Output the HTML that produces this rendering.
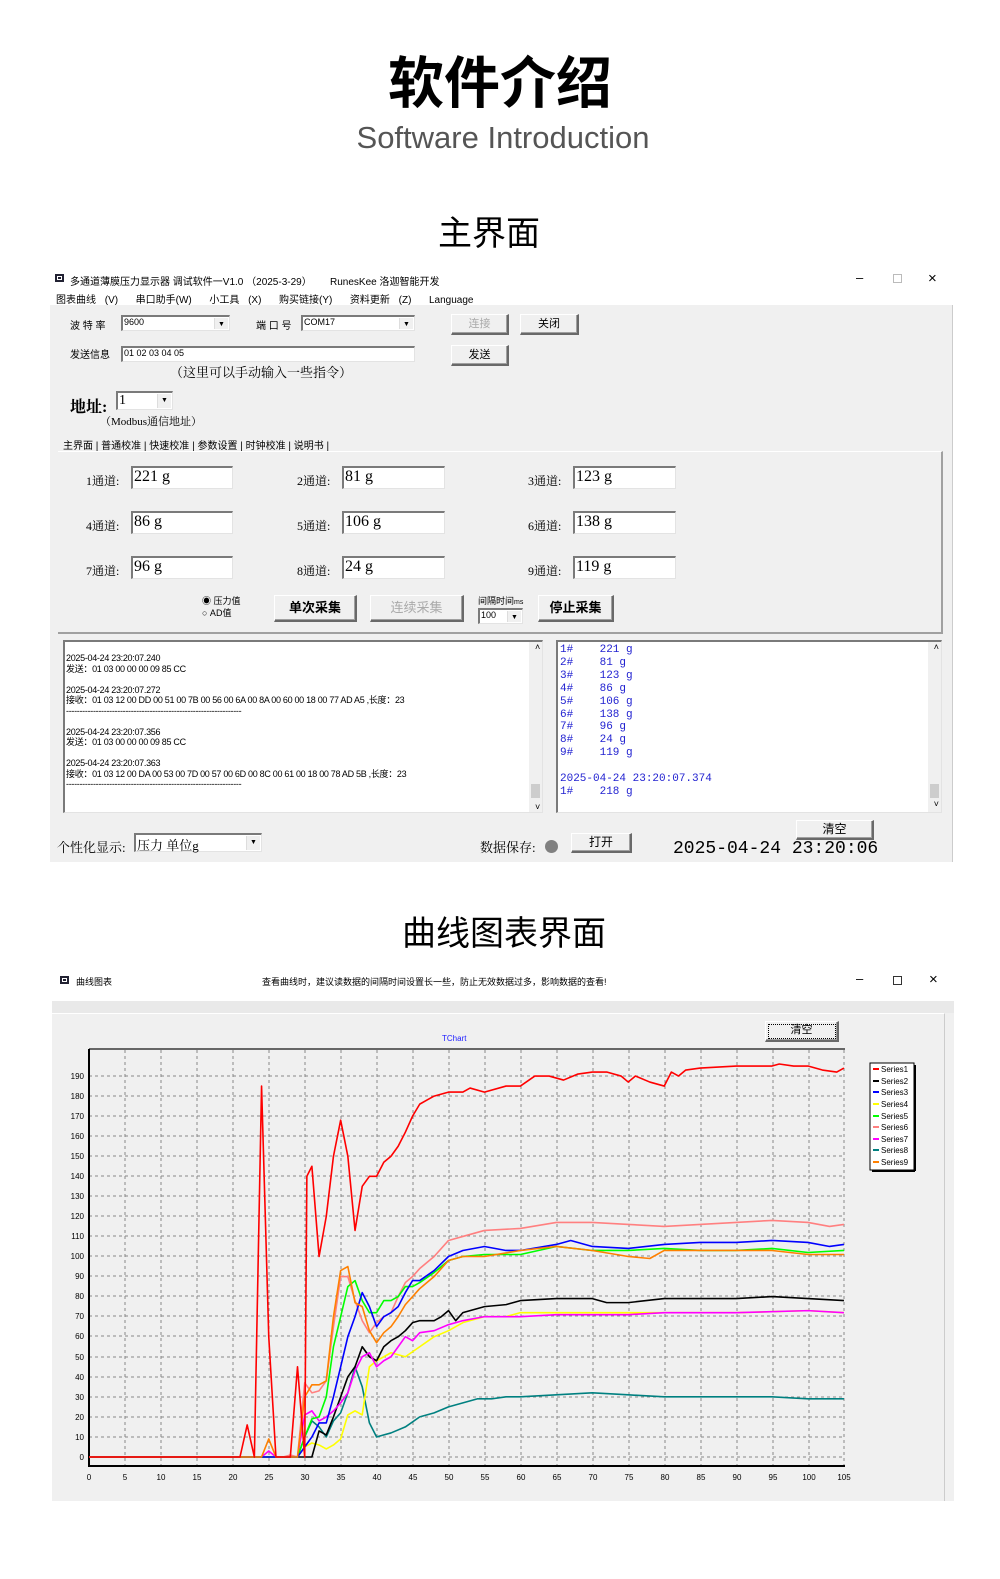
<!DOCTYPE html>
<html><head><meta charset="utf-8">
<style>
*{margin:0;padding:0;box-sizing:border-box}
body{width:1000px;height:1579px;background:#fff;position:relative;overflow:hidden;font-family:"Liberation Sans","Noto Sans CJK SC",sans-serif;color:#000}
.a{position:absolute;white-space:nowrap}
.s{font-family:"Liberation Serif","Noto Serif CJK SC",serif}
.inp{position:absolute;background:#fff;border-top:2px solid #7a7a7a;border-left:2px solid #7a7a7a;border-right:1px solid #e3e3e3;border-bottom:1px solid #e3e3e3}
.btn{position:absolute;background:#f0f0f0;border:1px solid #fff;border-right:2px solid #696969;border-bottom:2px solid #696969;box-shadow:inset -1px -1px 0 #a0a0a0;text-align:center;font-size:11px}
.dd{position:absolute;right:1px;top:1px;width:14px;bottom:1px;background:#f0f0f0;border-left:1px solid #ddd;font-size:7px;text-align:center;line-height:13px}
.sm{font-size:10px}
</style></head><body>

<div class="a" style="left:0;width:1000px;top:47px;text-align:center;font-size:56px;font-weight:bold;font-family:'Noto Sans CJK SC',sans-serif;line-height:66px">软件介绍</div>
<div class="a" style="left:0;width:1006px;top:120px;text-align:center;font-size:31px;color:#555;font-weight:300;line-height:36px">Software Introduction</div>
<div class="a" style="left:0;width:978px;top:210px;text-align:center;font-size:34px;font-family:'Noto Sans CJK SC',sans-serif;line-height:42px">主界面</div>
<div class="a" style="left:0;width:1008px;top:910px;text-align:center;font-size:34px;font-family:'Noto Sans CJK SC',sans-serif;line-height:42px">曲线图表界面</div>

<!-- main window -->
<div class="a" style="left:50px;top:268px;width:903px;height:594px;background:#f0f0f0;border-right:1px solid #ccc"></div>
<div class="a" style="left:50px;top:268px;width:903px;height:37px;background:#fff"></div>
<div class="a" style="left:55px;top:274px;width:9px;height:8px;background:#223;border:2px solid #223;box-shadow:inset 0 0 0 1px #fff"></div>
<div class="a sm" style="left:70px;top:273px">多通道薄膜压力显示器 调试软件一V1.0 （2025-3-29）</div>
<div class="a sm" style="left:330px;top:273px">RunesKee 洛迦智能开发</div>
<div class="a" style="left:856px;top:270px;font-size:13px">–</div>
<div class="a" style="left:893px;top:274px;width:9px;height:9px;border:1px solid #bbb"></div>
<div class="a" style="left:928px;top:270px;font-size:15px">×</div>
<div class="a sm" style="left:56px;top:291px;word-spacing:6px">图表曲线 (V)&nbsp; 串口助手(W)&nbsp; 小工具 (X)&nbsp; 购买链接(Y)&nbsp; 资料更新 (Z)&nbsp; Language</div>

<div class="a sm" style="left:70px;top:317px">波 特 率</div>
<div class="inp" style="left:121px;top:315px;width:109px;height:16px"><span class="a" style="left:1px;top:0;font-size:9px">9600</span><div class="dd">▼</div></div>
<div class="a sm" style="left:256px;top:317px">端 口 号</div>
<div class="inp" style="left:301px;top:315px;width:114px;height:16px"><span class="a" style="left:1px;top:0;font-size:9px">COM17</span><div class="dd">▼</div></div>
<div class="btn" style="left:451px;top:314px;width:58px;height:21px;line-height:18px;color:#aaa">连接</div>
<div class="btn" style="left:520px;top:314px;width:59px;height:21px;line-height:18px">关闭</div>
<div class="a sm" style="left:70px;top:346px">发送信息</div>
<div class="inp" style="left:121px;top:346px;width:294px;height:16px"><span class="a" style="left:1px;top:0;font-size:9px">01 02 03 04 05</span></div>
<div class="btn" style="left:451px;top:345px;width:58px;height:21px;line-height:18px">发送</div>
<div class="a s" style="left:170px;top:362px;font-size:13px">（这里可以手动输入一些指令）</div>
<div class="a s" style="left:70px;top:394px;font-size:16px;font-weight:bold">地址:</div>
<div class="inp" style="left:116px;top:391px;width:57px;height:19px"><span class="a s" style="left:1px;top:0;font-size:14px">1</span><div class="dd">▼</div></div>
<div class="a s" style="left:100px;top:413px;font-size:11px">（Modbus通信地址）</div>
<div class="a sm" style="left:63px;top:437px">主界面 | 普通校准 | 快速校准 | 参数设置 | 时钟校准 | 说明书 |</div>
<div class="a" style="left:58px;top:451px;width:885px;height:183px;border-right:2px solid #a0a0a0;border-bottom:2px solid #a0a0a0;border-top:1px solid #fff"></div>

<div class="a s" style="left:86px;top:472px;font-size:12px">1通道:</div>
<div class="inp s" style="left:131px;top:466px;width:102px;height:23px;font-size:16px;padding-left:1px">221 g</div>
<div class="a s" style="left:297px;top:472px;font-size:12px">2通道:</div>
<div class="inp s" style="left:342px;top:466px;width:103px;height:23px;font-size:16px;padding-left:1px">81 g</div>
<div class="a s" style="left:528px;top:472px;font-size:12px">3通道:</div>
<div class="inp s" style="left:573px;top:466px;width:103px;height:23px;font-size:16px;padding-left:1px">123 g</div>
<div class="a s" style="left:86px;top:517px;font-size:12px">4通道:</div>
<div class="inp s" style="left:131px;top:511px;width:102px;height:23px;font-size:16px;padding-left:1px">86 g</div>
<div class="a s" style="left:297px;top:517px;font-size:12px">5通道:</div>
<div class="inp s" style="left:342px;top:511px;width:103px;height:23px;font-size:16px;padding-left:1px">106 g</div>
<div class="a s" style="left:528px;top:517px;font-size:12px">6通道:</div>
<div class="inp s" style="left:573px;top:511px;width:103px;height:23px;font-size:16px;padding-left:1px">138 g</div>
<div class="a s" style="left:86px;top:562px;font-size:12px">7通道:</div>
<div class="inp s" style="left:131px;top:556px;width:102px;height:23px;font-size:16px;padding-left:1px">96 g</div>
<div class="a s" style="left:297px;top:562px;font-size:12px">8通道:</div>
<div class="inp s" style="left:342px;top:556px;width:103px;height:23px;font-size:16px;padding-left:1px">24 g</div>
<div class="a s" style="left:528px;top:562px;font-size:12px">9通道:</div>
<div class="inp s" style="left:573px;top:556px;width:103px;height:23px;font-size:16px;padding-left:1px">119 g</div>

<div class="a" style="left:202px;top:595px;font-size:9px;line-height:12px">◉ 压力值<br>○ AD值</div>
<div class="btn" style="left:274px;top:595px;width:83px;height:27px;line-height:24px;font-size:13px;font-weight:bold">单次采集</div>
<div class="btn" style="left:370px;top:595px;width:94px;height:27px;line-height:24px;font-size:13px;color:#aaa">连续采集</div>
<div class="a" style="left:478px;top:594px;font-size:9px">间隔时间<span style="font-size:7px">ms</span></div>
<div class="inp" style="left:478px;top:608px;width:45px;height:16px"><span class="a" style="left:1px;top:0;font-size:9px">100</span><div class="dd">▼</div></div>
<div class="btn" style="left:538px;top:595px;width:76px;height:27px;line-height:24px;font-size:13px;font-weight:bold">停止采集</div>

<div class="inp" style="left:63px;top:640px;width:480px;height:173px;font-size:9px;line-height:10.5px;padding:11px 0 0 1px;letter-spacing:-0.3px">
2025-04-24 23:20:07.240<br>发送：01 03 00 00 00 09 85 CC<br><br>2025-04-24 23:20:07.272<br>接收：01 03 12 00 DD 00 51 00 7B 00 56 00 6A 00 8A 00 60 00 18 00 77 AD A5 ,长度：23<br>-----------------------------------------------------------------<br><br>2025-04-24 23:20:07.356<br>发送：01 03 00 00 00 09 85 CC<br><br>2025-04-24 23:20:07.363<br>接收：01 03 12 00 DA 00 53 00 7D 00 57 00 6D 00 8C 00 61 00 18 00 78 AD 5B ,长度：23<br>-----------------------------------------------------------------
<div class="a" style="right:0;top:0;width:13px;bottom:0;background:#f0f0f0"></div>
<div class="a" style="right:2px;top:142px;width:9px;height:14px;background:#cdcdcd"></div>
<div class="a" style="right:2px;top:0;font-size:9px">˄</div><div class="a" style="right:2px;bottom:0;font-size:9px">˅</div>
</div>
<div class="inp" style="left:556px;top:640px;width:386px;height:173px;font-family:'Liberation Mono','Noto Sans CJK SC',monospace;font-size:11px;line-height:12.9px;color:#1f1fd0;padding:2px 0 0 2px">
1#&nbsp;&nbsp;&nbsp;&nbsp;221 g<br>2#&nbsp;&nbsp;&nbsp;&nbsp;81 g<br>3#&nbsp;&nbsp;&nbsp;&nbsp;123 g<br>4#&nbsp;&nbsp;&nbsp;&nbsp;86 g<br>5#&nbsp;&nbsp;&nbsp;&nbsp;106 g<br>6#&nbsp;&nbsp;&nbsp;&nbsp;138 g<br>7#&nbsp;&nbsp;&nbsp;&nbsp;96 g<br>8#&nbsp;&nbsp;&nbsp;&nbsp;24 g<br>9#&nbsp;&nbsp;&nbsp;&nbsp;119 g<br><br>2025-04-24 23:20:07.374<br>1#&nbsp;&nbsp;&nbsp;&nbsp;218 g
<div class="a" style="right:0;top:0;width:13px;bottom:0;background:#f0f0f0"></div>
<div class="a" style="right:2px;top:142px;width:9px;height:14px;background:#cdcdcd"></div>
<div class="a" style="right:2px;top:0;font-size:9px;color:#000">˄</div><div class="a" style="right:2px;bottom:0;font-size:9px;color:#000">˅</div>
</div>

<div class="a s" style="left:57px;top:837px;font-size:13px">个性化显示:</div>
<div class="inp s" style="left:134px;top:833px;width:128px;height:19px;font-size:13px;padding-left:1px">压力 单位g<div class="dd" style="font-family:sans-serif">▼</div></div>
<div class="a s" style="left:480px;top:837px;font-size:13px">数据保存:</div>
<div class="a" style="left:545px;top:840px;width:13px;height:13px;border-radius:50%;background:#808080"></div>
<div class="btn" style="left:571px;top:833px;width:61px;height:20px;line-height:17px;font-size:12px">打开</div>
<div class="btn" style="left:796px;top:820px;width:78px;height:20px;line-height:17px;font-size:12px">清空</div>
<div class="a" style="left:673px;top:839px;font-size:18px;font-family:'Liberation Mono',monospace">2025-04-24 23:20:06</div>

<!-- chart window -->
<div class="a" style="left:52px;top:968px;width:902px;height:533px;background:#f0f0f0"></div>
<div class="a" style="left:52px;top:968px;width:902px;height:33px;background:#fff"></div>
<div class="a" style="left:52px;top:1001px;width:902px;height:12px;background:#e9e9e9"></div>
<div class="a" style="left:52px;top:1013px;width:893px;height:488px;border-top:1px solid #fff;border-right:1px solid #ccc"></div>
<div class="a" style="left:60px;top:976px;width:9px;height:8px;background:#223;border:2px solid #223;box-shadow:inset 0 0 0 1px #fff"></div>
<div class="a" style="left:76px;top:975px;font-size:9px">曲线图表</div>
<div class="a" style="left:262px;top:975px;font-size:9px">查看曲线时，建议读数据的间隔时间设置长一些，防止无效数据过多，影响数据的查看!</div>
<div class="a" style="left:856px;top:971px;font-size:13px">–</div>
<div class="a" style="left:893px;top:976px;width:9px;height:9px;border:1.5px solid #333"></div>
<div class="a" style="left:929px;top:971px;font-size:15px">×</div>
<div class="btn" style="left:765px;top:1021px;width:74px;height:21px;line-height:16px;font-size:11px;outline:1px dotted #000;outline-offset:-4px">清空</div>
<div class="a" style="left:442px;top:1034px;font-size:8px;color:#2020ff">TChart</div>

<svg class="a" style="left:0;top:0" width="1000" height="1579">
<g stroke="#888" stroke-width="1" stroke-dasharray="3,3">
<line x1="125" y1="1050" x2="125" y2="1466"/><line x1="161" y1="1050" x2="161" y2="1466"/><line x1="197" y1="1050" x2="197" y2="1466"/><line x1="233" y1="1050" x2="233" y2="1466"/><line x1="269" y1="1050" x2="269" y2="1466"/><line x1="305" y1="1050" x2="305" y2="1466"/><line x1="341" y1="1050" x2="341" y2="1466"/><line x1="377" y1="1050" x2="377" y2="1466"/><line x1="413" y1="1050" x2="413" y2="1466"/><line x1="449" y1="1050" x2="449" y2="1466"/><line x1="485" y1="1050" x2="485" y2="1466"/><line x1="521" y1="1050" x2="521" y2="1466"/><line x1="557" y1="1050" x2="557" y2="1466"/><line x1="593" y1="1050" x2="593" y2="1466"/><line x1="629" y1="1050" x2="629" y2="1466"/><line x1="665" y1="1050" x2="665" y2="1466"/><line x1="701" y1="1050" x2="701" y2="1466"/><line x1="737" y1="1050" x2="737" y2="1466"/><line x1="773" y1="1050" x2="773" y2="1466"/><line x1="809" y1="1050" x2="809" y2="1466"/><line x1="844" y1="1050" x2="844" y2="1466"/>
<line x1="89" y1="1076" x2="844" y2="1076"/><line x1="89" y1="1096" x2="844" y2="1096"/><line x1="89" y1="1116" x2="844" y2="1116"/><line x1="89" y1="1136" x2="844" y2="1136"/><line x1="89" y1="1156" x2="844" y2="1156"/><line x1="89" y1="1176" x2="844" y2="1176"/><line x1="89" y1="1196" x2="844" y2="1196"/><line x1="89" y1="1216" x2="844" y2="1216"/><line x1="89" y1="1236" x2="844" y2="1236"/><line x1="89" y1="1256" x2="844" y2="1256"/><line x1="89" y1="1276" x2="844" y2="1276"/><line x1="89" y1="1296" x2="844" y2="1296"/><line x1="89" y1="1316" x2="844" y2="1316"/><line x1="89" y1="1336" x2="844" y2="1336"/><line x1="89" y1="1357" x2="844" y2="1357"/><line x1="89" y1="1377" x2="844" y2="1377"/><line x1="89" y1="1397" x2="844" y2="1397"/><line x1="89" y1="1417" x2="844" y2="1417"/><line x1="89" y1="1437" x2="844" y2="1437"/><line x1="89" y1="1457" x2="844" y2="1457"/>
</g>
<line x1="89" y1="1049" x2="845" y2="1049" stroke="#666" stroke-width="2"/>
<line x1="89" y1="1049" x2="89" y2="1466" stroke="#000" stroke-width="2"/>
<line x1="88" y1="1466" x2="845" y2="1466" stroke="#000" stroke-width="2"/>
<g font-size="8" font-family="Liberation Sans,sans-serif" text-anchor="end">
<text x="84" y="1079">190</text><text x="84" y="1099">180</text><text x="84" y="1119">170</text><text x="84" y="1139">160</text><text x="84" y="1159">150</text><text x="84" y="1179">140</text><text x="84" y="1199">130</text><text x="84" y="1219">120</text><text x="84" y="1239">110</text><text x="84" y="1259">100</text><text x="84" y="1279">90</text><text x="84" y="1299">80</text><text x="84" y="1319">70</text><text x="84" y="1339">60</text><text x="84" y="1360">50</text><text x="84" y="1380">40</text><text x="84" y="1400">30</text><text x="84" y="1420">20</text><text x="84" y="1440">10</text><text x="84" y="1460">0</text>
</g>
<g font-size="8" font-family="Liberation Sans,sans-serif" text-anchor="middle">
<text x="89" y="1480">0</text><text x="125" y="1480">5</text><text x="161" y="1480">10</text><text x="197" y="1480">15</text><text x="233" y="1480">20</text><text x="269" y="1480">25</text><text x="305" y="1480">30</text><text x="341" y="1480">35</text><text x="377" y="1480">40</text><text x="413" y="1480">45</text><text x="449" y="1480">50</text><text x="485" y="1480">55</text><text x="521" y="1480">60</text><text x="557" y="1480">65</text><text x="593" y="1480">70</text><text x="629" y="1480">75</text><text x="665" y="1480">80</text><text x="701" y="1480">85</text><text x="737" y="1480">90</text><text x="773" y="1480">95</text><text x="809" y="1480">100</text><text x="844" y="1480">105</text>
</g>
<g transform="translate(89,1457) scale(7.19,-2.005)" fill="none" stroke-width="1.6" stroke-linejoin="round">
<polyline vector-effect="non-scaling-stroke" stroke="#008080" points="0,0 29,0 30,10 31,18 32,15 33,10 34,18 35,22 36,32 37,45 38,35 39,17 40,10 42,12 44,15 46,20 48,22 50,25 52,27 54,29 56,29 58,30 60,30 65,31 70,32 75,31 80,30 85,30 90,30 95,30 100,29 105,29"/>
<polyline vector-effect="non-scaling-stroke" stroke="#ffff00" points="0,0 29,0 30,5 31,7 32,6 33,4 34,6 35,9 36,21 37,23 38,21 39,45 40,48 42,52 44,50 46,55 48,60 50,63 52,67 55,70 58,70 60,72 65,72 70,72 75,72 80,72 90,72 100,73 105,72"/>
<polyline vector-effect="non-scaling-stroke" stroke="#000" points="0,0 31,0 32,13 33,11 34,20 35,30 36,40 37,45 38,55 39,50 40,48 41,55 42,58 43,60 44,63 45,67 46,68 48,68 49,70 50,73 51,68 52,72 53,73 55,75 58,76 60,78 65,79 70,79 72,77 75,77 80,79 90,79 95,80 100,79 105,78"/>
<polyline vector-effect="non-scaling-stroke" stroke="#ff00ff" points="0,0 24,0 25,3 26,0 29,0 30,21 31,23 32,18 33,20 34,23 35,27 36,32 37,43 38,50 39,52 40,45 41,48 42,50 43,55 44,60 45,58 46,62 48,63 50,66 52,68 55,70 60,70 65,71 70,71 75,71 80,72 90,72 100,73 105,72"/>
<polyline vector-effect="non-scaling-stroke" stroke="#ff8080" points="0,0 27,0 28,1 29,0 30,37 31,32 32,33 33,38 34,65 35,90 36,90 37,78 38,68 39,62 40,67 41,70 42,72 43,80 44,87 45,90 46,94 48,100 50,108 52,110 55,113 60,114 65,117 70,117 75,116 80,115 85,116 90,117 95,118 100,117 103,115 105,116"/>
<polyline vector-effect="non-scaling-stroke" stroke="#00ff00" points="0,0 29,0 30,10 31,19 32,20 33,30 34,55 35,70 36,85 37,88 38,78 39,72 40,72 41,78 42,78 43,80 44,85 45,85 46,87 48,92 50,98 52,100 55,101 60,101 65,105 70,103 75,103 80,104 85,103 90,103 95,104 100,102 105,103"/>
<polyline vector-effect="non-scaling-stroke" stroke="#0000ff" points="0,0 29,0 30,5 31,10 32,17 33,17 34,30 35,45 36,60 37,70 38,82 39,75 40,65 41,70 42,72 43,75 44,82 45,88 46,88 48,93 50,100 52,103 55,105 58,103 60,103 65,106 67,108 70,105 75,104 80,106 85,107 90,107 95,108 100,107 103,105 105,106"/>
<polyline vector-effect="non-scaling-stroke" stroke="#ff8000" points="0,0 24,0 25,9 26,0 29,0 30,30 31,36 32,36 33,38 34,70 35,93 36,95 37,77 38,75 39,63 40,57 41,62 42,65 43,70 44,76 45,80 46,84 48,90 50,98 52,100 55,100 60,103 65,105 70,103 75,100 78,99 80,103 85,103 90,103 95,103 100,101 105,101"/>
<polyline vector-effect="non-scaling-stroke" stroke="#ff0000" points="0,0 21,0 22,16 23,0 24,185 25,60 26,0 28,0 29,45 30,0 30.3,140 31,145 32,100 33,120 34,150 35,168 36,150 37,113 38,135 39,140 40,140 41,147 42,150 43,155 44,162 45,170 46,176 47,178 48,180 50,182 52,182 53,184 55,182 58,185 60,185 62,190 64,190 66,188 68,191 70,192 72,192 74,190 75,187 76,190 78,187 80,185 81,192 82,190 83,193 85,194 90,195 95,195 96,196 98,195 100,195 102,193 104,192 105,194"/>
</g>
<rect x="870" y="1063" width="44" height="107" fill="#fff" stroke="#000"/>
<line x1="915" y1="1065" x2="915" y2="1171" stroke="#000" stroke-width="2"/>
<line x1="872" y1="1171" x2="915" y2="1171" stroke="#000" stroke-width="2"/>
<g stroke-width="2">
<line x1="873" x2="879" y1="1069" y2="1069" stroke="#f00"/><line x1="873" x2="879" y1="1081" y2="1081" stroke="#000"/><line x1="873" x2="879" y1="1092" y2="1092" stroke="#00f"/><line x1="873" x2="879" y1="1104" y2="1104" stroke="#ff0"/><line x1="873" x2="879" y1="1116" y2="1116" stroke="#0f0"/><line x1="873" x2="879" y1="1127" y2="1127" stroke="#ff8080"/><line x1="873" x2="879" y1="1139" y2="1139" stroke="#f0f"/><line x1="873" x2="879" y1="1150" y2="1150" stroke="#008080"/><line x1="873" x2="879" y1="1162" y2="1162" stroke="#ff8000"/>
</g>
<g font-size="8" font-family="Liberation Sans,sans-serif">
<text x="881" y="1072">Series1</text><text x="881" y="1084">Series2</text><text x="881" y="1095">Series3</text><text x="881" y="1107">Series4</text><text x="881" y="1119">Series5</text><text x="881" y="1130">Series6</text><text x="881" y="1142">Series7</text><text x="881" y="1153">Series8</text><text x="881" y="1165">Series9</text>
</g>
</svg>
</body></html>
